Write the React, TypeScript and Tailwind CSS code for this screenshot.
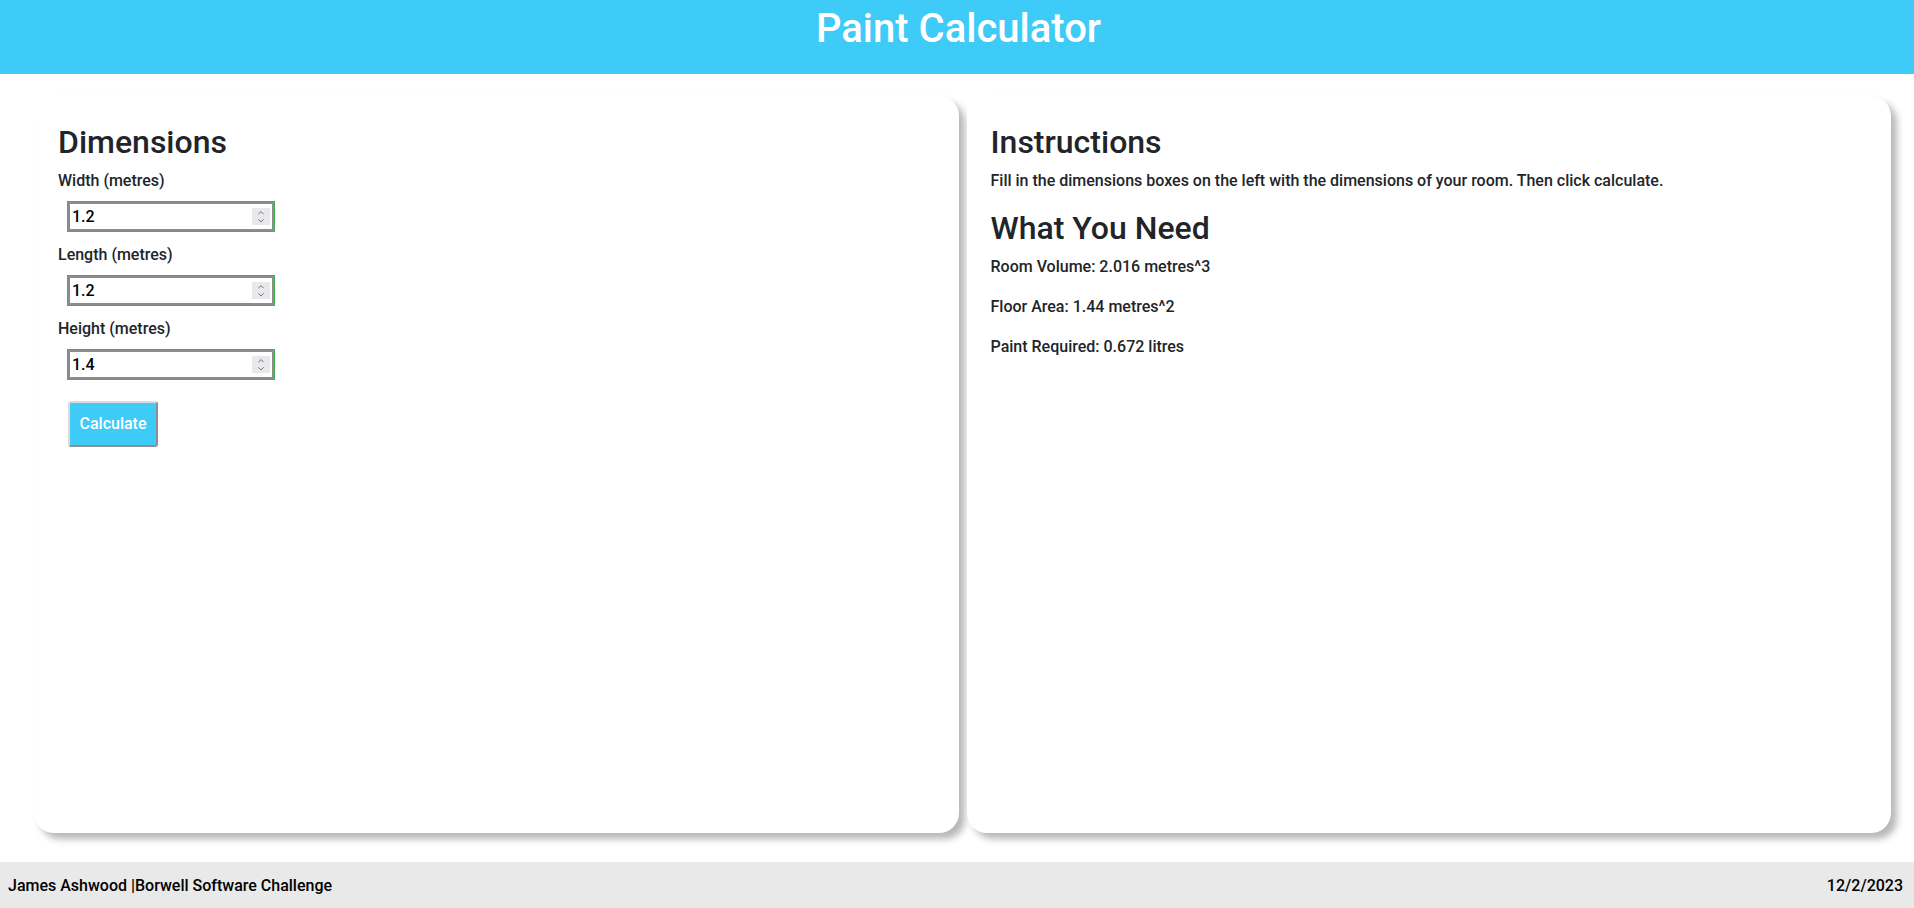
import { ChevronUp, ChevronDown } from "lucide-react";

const fields = [
	{ label: "Width (metres)", value: "1.2" },
	{ label: "Length (metres)", value: "1.2" },
	{ label: "Height (metres)", value: "1.4" },
];

function NumberBox({ value }: { value: string }) {
	return (
		<div className="relative ml-[9px] w-[208px] h-[31px] border border-[#3fb34f]">
			<input
				type="text"
				defaultValue={value}
				className="w-full h-full border-2 border-[#8d8d8d] bg-white px-[2px] text-[16px] font-medium text-black outline-none"
			/>
			{/* spinner buttons */}
			<span className="absolute right-[4px] top-[6px] w-[18px] h-[17px] bg-[#e9e9ed] flex flex-col items-center justify-center text-[#6a6a6a]">
				<ChevronUp size={10} strokeWidth={2.4} className="-mb-[1px]" />
				<ChevronDown size={10} strokeWidth={2.4} className="-mt-[1px]" />
			</span>
		</div>
	);
}

function App() {
	return (
		<div className="h-screen flex flex-col bg-white text-[#212529] font-['Roboto',sans-serif]">
			<header className="bg-[#3fcbf7] h-[74px] shrink-0">
				<h1 className="pt-[5px] pl-[3px] text-center text-[40px] leading-[48px] font-medium text-white">
					Paint Calculator
				</h1>
			</header>

			<main className="flex-1 min-h-0 flex gap-[8px] pl-[34px] pr-[23px] pt-[22px] pb-[29px]">
				{/* dimensions form */}
				<div className="flex-1 bg-white rounded-[20px] shadow-[6px_6px_7px_#b8b8b8] pt-[27px] pr-6 pl-[24px]">
					<h2 className="text-[32px] leading-[38px] font-medium mb-2">Dimensions</h2>
					{fields.map((f) => (
						<div key={f.label} className="mb-[11px]">
							<label className="block text-[16px] leading-6 font-medium mb-2">{f.label}</label>
							<NumberBox value={f.value} />
						</div>
					))}
					<button className="mt-[10px] ml-[10px] w-[90px] h-[46px] bg-[#3ecbf7] text-white text-[16px] font-medium border-2 border-[#dcdcdc] border-r-[#8f8f8f] border-b-[#8f8f8f] rounded-[3px]">
						Calculate
					</button>
				</div>

				{/* instructions + results */}
				<div className="flex-1 bg-white rounded-[20px] shadow-[6px_6px_7px_#b8b8b8] pt-[27px] px-6">
					<h2 className="text-[32px] leading-[38px] font-medium mb-2">Instructions</h2>
					<p className="text-[16px] leading-6 font-medium mb-4">
						Fill in the dimensions boxes on the left with the dimensions of your room. Then click calculate.
					</p>
					<h2 className="text-[32px] leading-[38px] font-medium mb-2">What You Need</h2>
					<p className="text-[16px] leading-6 font-medium mb-4">Room Volume: 2.016 metres^3</p>
					<p className="text-[16px] leading-6 font-medium mb-4">Floor Area: 1.44 metres^2</p>
					<p className="text-[16px] leading-6 font-medium mb-4">Paint Required: 0.672 litres</p>
				</div>
			</main>

			<footer className="bg-[#e9e9e9] h-[46px] shrink-0 flex justify-between items-start pt-[12px] pl-[8px] pr-[11px] text-[16px] leading-6 font-medium text-black">
				<span>James Ashwood |Borwell Software Challenge</span>
				<span>12/2/2023</span>
			</footer>
		</div>
	);
}

export default App;
